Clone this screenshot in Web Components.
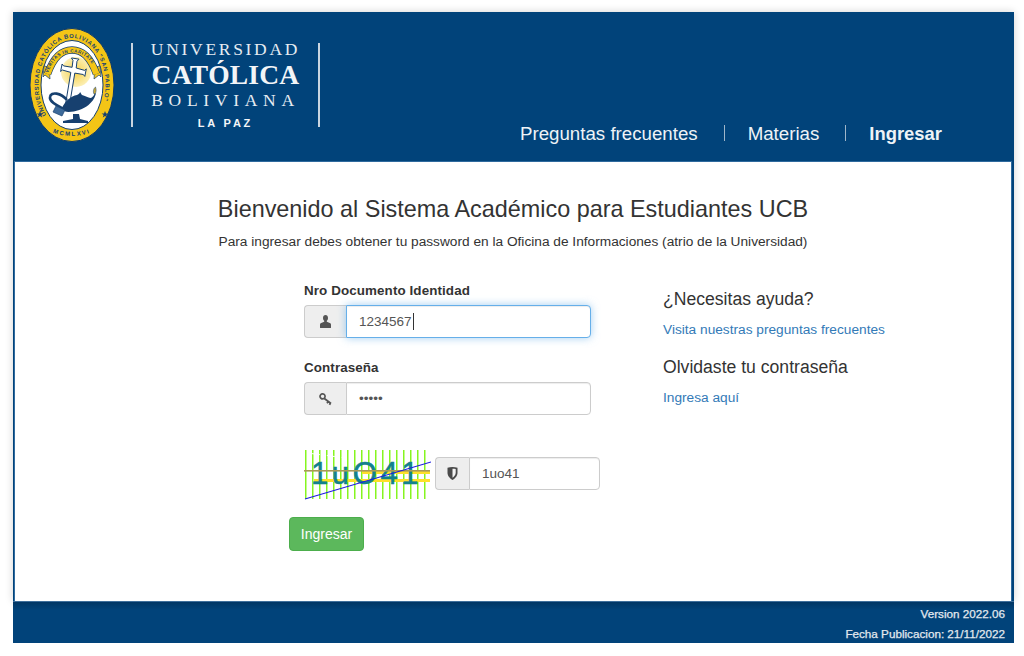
<!DOCTYPE html>
<html lang="es">
<head>
<meta charset="utf-8">
<title>Sistema Académico UCB</title>
<style>
  html, body { margin: 0; height: 100%; background: #fff; }
  body { font-family: "Liberation Sans", Arial, sans-serif; color: #333; }
</style>
</head>
<body>

<ucb-shell>
  <ucb-header slot="header">
    <ucb-nav-link>Preguntas frecuentes</ucb-nav-link>
    <ucb-nav-link separated>Materias</ucb-nav-link>
    <ucb-nav-link separated active>Ingresar</ucb-nav-link>
  </ucb-header>

  <ucb-intro title-text="Bienvenido al Sistema Académico para Estudiantes UCB">
    Para ingresar debes obtener tu password en la Oficina de Informaciones (atrio de la Universidad)
  </ucb-intro>

  <ucb-login>
    <ucb-field slot="form" label="Nro Documento Identidad" icon="user" focused>1234567</ucb-field>
    <ucb-field slot="form" label="Contraseña" icon="key" secret>•••••</ucb-field>
    <ucb-captcha slot="form" code="1uo41"></ucb-captcha>
    <ucb-button slot="form">Ingresar</ucb-button>

    <ucb-help slot="help" heading="¿Necesitas ayuda?">Visita nuestras preguntas frecuentes</ucb-help>
    <ucb-help slot="help" heading="Olvidaste tu contraseña">Ingresa aquí</ucb-help>
  </ucb-login>

  <ucb-footer slot="footer">
    <div>Version 2022.06</div>
    <div>Fecha Publicacion: 21/11/2022</div>
  </ucb-footer>
</ucb-shell>

<script>
const ICONS = {
  user: `<svg width="11" height="13" viewBox="0 0 11 13"><path fill="#555" d="M5.500 0C4 0 3 1.200 3 2.900c0 1.200.5 2.300 1.200 2.900v.9L1.200 8C.4 8.300 0 8.800 0 9.600v2.800c0 .3.200.6.600.6h9.800c.4 0 .6-.3.600-.6V9.600c0-.8-.4-1.300-1.200-1.600L6.800 6.700v-.9C7.500 5.200 8 4.100 8 2.900 8 1.200 7 0 5.500 0z"/></svg>`,
  key: `<svg width="14" height="14" viewBox="0 0 14 14"><path fill="none" stroke="#555" stroke-width="1.700" d="M1.300 3.300a2.500 2.500 0 1 1 3.700 3.100 2.500 2.500 0 0 1-3.700-3.100z"/><path fill="none" stroke="#555" stroke-width="1.800" d="M5 6.200l7 5.300M9.300 9.500l-1.300 1.700M11.500 11.200l-1.100 1.500"/></svg>`,
  shield: `<svg width="11" height="13" viewBox="0 0 11 13"><path fill="#4a4a4a" d="M.5.800C2 .2 3.700 0 5.500 0s3.500.2 5 .8v5c0 3.300-2.600 5.900-5 7.200C3.100 11.700.5 9.100.5 5.800z"/><path fill="#f4f4f4" d="M5.500 1.700c1 0 2.100.1 3.200.4v3.700c0 2-1.500 3.800-3.200 5z"/></svg>`
};

// small helper so every element below only has to give its html
class ShadowElement extends HTMLElement {
  constructor() {
    super();
    this.attachShadow({ mode: "open" });
  }
  render(html) {
    this.shadowRoot.innerHTML = html;
  }
}

class UcbShell extends ShadowElement {
  connectedCallback() {
    this.render(`
      <style>
        :host { display: block; padding: 12px 10px 13px 13px; box-sizing: border-box; height: 656px; }
        #frame { display: flex; flex-direction: column; height: 631px; background: #01437a; }
        #top {
          flex: 1; display: flex; flex-direction: column;
          box-shadow: 0 0 8px rgba(0,0,0,.18);
        }
        #body { flex: 1; margin: 0 3px 0 2px; background: #fff; box-shadow: 0 0 0 1px #2f6a9e; }
      </style>
      <div id="frame">
        <div id="top">
          <slot name="header"></slot>
          <div id="body"><slot></slot></div>
        </div>
        <slot name="footer"></slot>
      </div>`);
  }
}

class UcbHeader extends ShadowElement {
  connectedCallback() {
    this.render(`
      <style>
        :host { display: flex; height: 150px; box-sizing: border-box; padding: 16px 0 0 16px; background: #01437a; }
        #brand { display: flex; align-items: flex-start; flex: none; }
        #wordmark {
          margin: 15px 0 0 16px; height: 84px; box-sizing: border-box; width: 189px;
          border-left: 2px solid #c9d5e0; border-right: 2px solid #c9d5e0;
          color: #e6ecf2; font-family: "Liberation Serif", serif; text-align: center; white-space: nowrap;
        }
        #wordmark div { line-height: 1; }
        .l1 { font-size: 17.500px; letter-spacing: 2.700px; margin-top: -2px; }
        .l2 { font-size: 27.500px; font-weight: bold; letter-spacing: .2px; margin-top: 2px; color: #f2f5f8; }
        .l3 { font-size: 17.500px; letter-spacing: 5.700px; margin-top: 4px; }
        .l4 { font-family: "Liberation Sans", sans-serif; font-size: 11px; font-weight: bold; letter-spacing: 2.800px; margin-top: 8px; color: #f2f5f8; }
        nav { display: flex; align-items: center; height: 24px; margin: 94px 0 0 200px; }
      </style>
      <div id="brand">
        <ucb-seal></ucb-seal>
        <div id="wordmark">
          <div class="l1">UNIVERSIDAD</div>
          <div class="l2">CATÓLICA</div>
          <div class="l3">BOLIVIANA</div>
          <div class="l4">LA PAZ</div>
        </div>
      </div>
      <nav><slot></slot></nav>`);
  }
}

class UcbSeal extends ShadowElement {
  connectedCallback() {
    this.render(`
      <style>:host { display: block; width: 86px; height: 116px; flex: none; }</style>
      <svg width="86" height="116" viewBox="0 0 86 116">
        <defs>
          <path id="top" d="M17.200 87A33.500 47 0 1 1 68.800 87"/>
          <path id="band" d="M19 45C25 29 33 24.500 43 24.500S61 29 67 45"/>
          <path id="bottom" d="M24 104.500C33 109 53 109 62 104.500"/>
          <radialGradient id="sun"><stop offset="0" stop-color="#f7d24a"/><stop offset="1" stop-color="#fcefb5"/></radialGradient>
        </defs>
        <ellipse cx="43" cy="57" rx="42" ry="56.500" fill="#f4c516" stroke="#0d3a6d" stroke-width="1"/>
        <ellipse cx="43" cy="57" rx="31" ry="44.500" fill="#fff" stroke="#17406f" stroke-width="1"/>
        <text font-family="Liberation Sans" font-weight="bold" font-size="5.800" fill="#17406f"><textPath href="#top" textLength="174" lengthAdjust="spacing">UNIVERSIDAD CATÓLICA BOLIVIANA "SAN PABLO"</textPath></text>
        <circle cx="47" cy="44" r="15" fill="url(#sun)"/>
        <path d="M15 38l5 1 1 12-5-4-2 2zM71 38l-5 1-1 12 5-4 2 2z" fill="#f4c516" stroke="#17406f" stroke-width=".7"/>
        <path d="M18.500 46C25 28 33 22 43 22s18 6 24.500 24" fill="none" stroke="#17406f" stroke-width="7.500"/>
        <path d="M18.500 46C25 28 33 22 43 22s18 6 24.500 24" fill="none" stroke="#f4c516" stroke-width="6.200"/>
        <text font-family="Liberation Sans" font-weight="bold" font-size="4.500" fill="#17406f"><textPath href="#band" textLength="58" lengthAdjust="spacing">VERITAS IN CARITATE</textPath></text>
        <path d="M43 30l7 1.200-2 2-.8 6.800 8.500 2.400 1.600-1.500-1.500 7.500-1.500-1.900-8.500-1.400-5.800 35-4-.7 5.800-35-8.500-2.400-1.700 1.500 1.500-7.500 1.500 1.900 8.500 1.400.9-7-1.600-2.200z" fill="#fff" stroke="#17406f" stroke-width="1" stroke-linejoin="round"/>
        <path d="M38 72C32 65 22 63 21 69c-1 5 8 9 14 12" fill="none" stroke="#17406f" stroke-width="2.600"/>
        <path d="M33 80c3-7 9-12 15-13 2-1 3-2 3-3 1 1 1 2 2 3 4 1 7 3 9 3 2-1 3-3 4-5 1 0 1 1 .5 2-1 4-4 7-7 10-5 4-13 7-20 7-3 0-5-1-6-4z" fill="#17406f"/>
        <path d="M27 78l9 4-3 6-9-4z" fill="#3d6a9a" stroke="#17406f" stroke-width=".7"/>
        <path d="M44 86h6l1 5 8 2v2H34v-2l10-2z" fill="#17406f"/>
        <path d="M65 66c-1.500-3 0-6 1.500-7 1 2.500.8 5-.5 7z" fill="#c8a838" stroke="#17406f" stroke-width=".5"/>
        <path d="M11 83l1 2.400h2.400l-2 1.500.8 2.500-2.200-1.500-2.200 1.500.8-2.500-2-1.500H10zM76 83l1 2.400h2.400l-2 1.500.8 2.500-2.200-1.500-2.200 1.500.8-2.500-2-1.500H75z" fill="#17406f"/>
        <text font-family="Liberation Sans" font-weight="bold" font-size="6" fill="#17406f"><textPath href="#bottom" textLength="37" lengthAdjust="spacing">MCMLXVI</textPath></text>
      </svg>`);
  }
}

class UcbNavLink extends ShadowElement {
  connectedCallback() {
    const sep = this.hasAttribute("separated");
    const active = this.hasAttribute("active");
    this.render(`
      <style>
        :host { display: inline-flex; align-items: center; color: #eef3f7; font-size: ${active ? "18.400px" : "18.700px"}; ${active ? "font-weight: bold;" : ""} }
        i { width: 1px; height: 16px; margin: -3px 23px 0 26px; background: #9fb6ca; }
        span { white-space: nowrap; }
      </style>
      ${sep ? "<i></i>" : ""}<span><slot></slot></span>`);
  }
}

class UcbIntro extends ShadowElement {
  connectedCallback() {
    this.render(`
      <style>
        :host { display: block; text-align: center; padding: 33px 0 0 0; }
        h1 { margin: 0; font-size: 23.400px; font-weight: 400; line-height: 28px; color: #333; }
        p { margin: 10px 0 0; font-size: 13.700px; line-height: 18px; color: #333; }
      </style>
      <h1>${this.getAttribute("title-text")}</h1>
      <p><slot></slot></p>`);
  }
}

class UcbLogin extends ShadowElement {
  connectedCallback() {
    this.render(`
      <style>
        :host { display: grid; grid-template-columns: 374px 1fr; margin: 31px 0 0 274px; }
        #form, #help { display: flex; flex-direction: column; }
        #help { padding-top: 4px; gap: 15px; }
      </style>
      <div id="form"><slot name="form"></slot></div>
      <div id="help"><slot name="help"></slot></div>`);
  }
}

class UcbField extends ShadowElement {
  connectedCallback() {
    const focused = this.hasAttribute("focused");
    const icon = ICONS[this.getAttribute("icon")];
    this.render(`
      <style>
        :host { display: block; margin: 0 0 21px 15px; width: 287px; }
        label { display: block; font-size: 13.400px; font-weight: bold; line-height: 17px; margin-bottom: 6px; color: #333; letter-spacing: .1px; }
        #group { display: flex; height: 33px; box-sizing: border-box; }
        #addon {
          width: 42px; flex: none; display: flex; align-items: center; justify-content: center;
          background: #eee; border: 1px solid #ccc; border-right: 0; border-radius: 4px 0 0 4px; box-sizing: border-box;
        }
        #input {
          flex: 1; display: flex; align-items: center; padding: 0 12px; box-sizing: border-box;
          font-size: 13.500px; color: #555; background: #fff;
          border: 1px solid ${focused ? "#66afe9" : "#ccc"}; border-radius: 0 4px 4px 0;
          ${focused ? "box-shadow: inset 0 1px 1px rgba(0,0,0,.075), 0 0 8px rgba(102,175,233,.6);" : "box-shadow: inset 0 1px 1px rgba(0,0,0,.075);"}
        }
        #caret { width: 1px; height: 17px; background: #333; margin-left: 1px; }
      </style>
      <label>${this.getAttribute("label")}</label>
      <div id="group">
        <div id="addon">${icon}</div>
        <div id="input"><slot></slot>${focused ? '<span id="caret"></span>' : ""}</div>
      </div>`);
  }
}

class UcbCaptcha extends ShadowElement {
  connectedCallback() {
    let bars = "";
    for (let x = 1; x < 126; x += 7) {
      bars += `<rect x="${x}" y="0" width="1.500" height="49" fill="#86f51f"/>`;
    }
    this.render(`
      <style>
        :host { display: flex; align-items: flex-start; margin: 14px 0 0 15px; height: 50px; }
        svg { flex: none; display: block; }
        #group { display: flex; height: 33px; width: 165px; margin: 7px 0 0 4px; box-sizing: border-box; }
        #addon {
          width: 34px; flex: none; display: flex; align-items: center; justify-content: center;
          background: #eee; border: 1px solid #ccc; border-right: 0; border-radius: 4px 0 0 4px; box-sizing: border-box;
        }
        #input {
          flex: 1; display: flex; align-items: center; padding: 0 12px; box-sizing: border-box;
          font-size: 13.500px; color: #555; background: #fff;
          border: 1px solid #ccc; border-radius: 0 4px 4px 0; box-shadow: inset 0 1px 1px rgba(0,0,0,.075);
        }
      </style>
      <svg width="127" height="50" viewBox="0 0 127 50">
        ${bars}
        <rect x="58" y="21" width="68" height="3" fill="#ffdf2a"/>
        <rect x="10" y="29" width="116" height="3" fill="#ffdf2a"/>
        <text x="7" y="34" font-family="Liberation Sans" font-size="31" letter-spacing="3.600" fill="#12818c" stroke="#12818c" stroke-width=".5">1uO41</text>
        <rect x="0" y="20" width="126" height="1.600" fill="#a89a58"/>
        <line x1="1" y1="49" x2="127" y2="12" stroke="#1c1ce0" stroke-width="1.100"/>
        <line x1="3" y1="3" x2="42" y2="8" stroke="#fff" stroke-width="1" stroke-dasharray="3 2"/>
      </svg>
      <div id="group">
        <div id="addon">${ICONS.shield}</div>
        <div id="input">${this.getAttribute("code")}</div>
      </div>`);
  }
}

class UcbButton extends ShadowElement {
  connectedCallback() {
    this.render(`
      <style>
        :host { display: block; margin-top: 17px; width: 75px; }
        button {
          display: block; width: 75px; height: 34px; padding: 0; cursor: pointer;
          font: 14px "Liberation Sans", Arial, sans-serif; color: #fff;
          background: #5cb85c; border: 1px solid #4cae4c; border-radius: 4px;
        }
      </style>
      <button type="button"><slot></slot></button>`);
  }
}

class UcbHelp extends ShadowElement {
  connectedCallback() {
    this.render(`
      <style>
        :host { display: block; }
        h4 { margin: 0; font-size: 17.600px; font-weight: 400; line-height: 26px; color: #333; }
        a { display: block; margin-top: 9px; font-size: 13.700px; line-height: 18px; color: #337ab7; text-decoration: none; }
      </style>
      <h4>${this.getAttribute("heading")}</h4>
      <a href="#"><slot></slot></a>`);
  }
}

class UcbFooter extends ShadowElement {
  connectedCallback() {
    this.render(`
      <style>
        :host {
          display: block; height: 42px; box-sizing: border-box; padding: 2px 9px 0 0; text-align: right;
          color: #e3e9ef; font-size: 11.700px; line-height: 20px; -webkit-text-stroke: .25px #e3e9ef;
          border-top: 1px solid #3f6f9b;
          background: linear-gradient(#013664, #01437a 8px);
        }
      </style>
      <slot></slot>`);
  }
}

customElements.define("ucb-shell", UcbShell);
customElements.define("ucb-header", UcbHeader);
customElements.define("ucb-seal", UcbSeal);
customElements.define("ucb-nav-link", UcbNavLink);
customElements.define("ucb-intro", UcbIntro);
customElements.define("ucb-login", UcbLogin);
customElements.define("ucb-field", UcbField);
customElements.define("ucb-captcha", UcbCaptcha);
customElements.define("ucb-button", UcbButton);
customElements.define("ucb-help", UcbHelp);
customElements.define("ucb-footer", UcbFooter);
</script>
</body>
</html>
